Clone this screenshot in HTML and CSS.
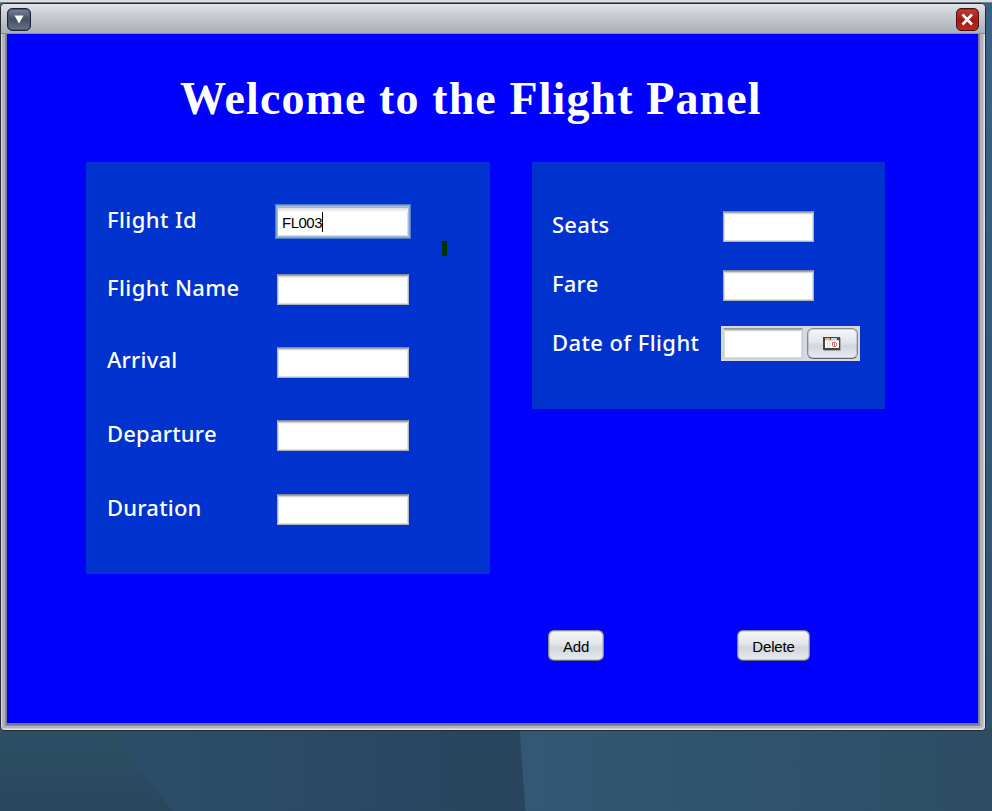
FILE: index.html
```html
<!DOCTYPE html>
<html lang="en">
<head>
<meta charset="utf-8">
<title>Flight Panel</title>
<link rel="stylesheet" href="styles.css">
</head>
<body>
<svg class="wallpaper" viewBox="0 0 992 811" preserveAspectRatio="none" aria-hidden="true">
  <defs>
    <linearGradient id="a" x1="0" y1="0" x2="0" y2="1"><stop offset="0" stop-color="#2e5063"/><stop offset="1" stop-color="#29465d"/></linearGradient>
    <linearGradient id="b" x1="0" y1="0" x2="1" y2="0"><stop offset="0" stop-color="#2d4e69"/><stop offset="1" stop-color="#29445d"/></linearGradient>
    <linearGradient id="c" x1="0" y1="0" x2="1" y2="0"><stop offset="0" stop-color="#325873"/><stop offset="1" stop-color="#2e4d64"/></linearGradient>
    <linearGradient id="d" x1="0" y1="0" x2="0" y2="1"><stop offset="0" stop-color="#3a6285"/><stop offset="1" stop-color="#2e5068"/></linearGradient>
  </defs>
  <rect width="992" height="811" fill="url(#d)"/>
  <path d="M0 728H110L174 811H0Z" fill="url(#a)"/>
  <path d="M109 728H520L526 811H173Z" fill="url(#b)"/>
  <path d="M519.500 728H992V811H525.500Z" fill="url(#c)"/>
</svg>
<div class="desktop-edge"></div>
<main class="window">
  <header class="titlebar">
    <button class="sys menu" aria-label="Menu"><svg width="22" height="21" viewBox="0 0 22 21"><path d="M6.500 6.500H15.500L11 14.500Z" fill="#fff"/></svg></button>
    <button class="sys close" aria-label="Close"><svg width="21" height="21" viewBox="0 0 21 21"><path d="M5.500 5.500L15 15.500M15 5.500L5.500 15.500" stroke="#fff" stroke-width="2.600"/></svg></button>
  </header>
  <section class="content">
    <h1>Welcome to the Flight Panel</h1>
    <div class="panels">
      <form class="panel route">
        <label>Flight Id</label><div class="field focused"><span>FL003</span></div>
        <label>Flight Name</label><div class="field"></div>
        <label class="tight raised">Arrival</label><div class="field"></div>
        <label class="tight">Departure</label><div class="field"></div>
        <label class="tight">Duration</label><div class="field"></div>
        <i class="mark"></i>
      </form>
      <form class="panel booking">
        <label class="tight">Seats</label><div class="field"></div>
        <label class="tight">Fare</label><div class="field"></div>
        <label>Date of Flight</label>
        <div class="date"><div class="field"></div><button type="button" class="btn" aria-label="Choose date"><svg width="18" height="14" viewBox="0 0 18 14" shape-rendering="crispEdges"><path d="M1 1H18V14H1Z" fill="#aaa"/><path d="M0 0H17V13H0Z" fill="#444"/><path d="M2 4H16V11H2Z" fill="#fff"/><path d="M2 1H7V3H2Z" fill="#f9b94b"/><path d="M8 1H14V3H8Z" fill="#bcd4f6"/><path d="M2 3H16V4H2Z" fill="#ddd"/><path d="M4 5H5V11H4ZM6 4H7V11H6Z" fill="#ddd"/><path d="M9 5H13V6H14V9H13V10H10V9H9Z" fill="#e66a66"/><path d="M10 6H11V9H10ZM12 6H13V9H12Z" fill="#fff"/></svg></button></div>
      </form>
    </div>
    <div class="actions"><button class="btn add">Add</button><button class="btn delete">Delete</button></div>
  </section>
</main>
</body>
</html>
```
FILE: styles.css
```css
* { box-sizing: border-box; }
body { margin: 0; height: 811px; overflow: hidden; position: relative; font-family: "Liberation Sans", sans-serif; }
button { padding: 0; font-family: inherit; }
svg { display: block; }
.wallpaper { position: absolute; inset: 0; width: 992px; height: 811px; z-index: -1; }
.desktop-edge { height: 3px; background: linear-gradient(#d8dce5 0 2px, #777d88 2px); }
.window { width: 986px; height: 728px; border: 1px solid #252a32; border-radius: 5px 5px 4px 4px; background: #b0b3bd; box-shadow: inset 1px 0 #d9dbe3, inset -1px -1px #e4e5ea, inset -2px -2px #c9cad4; padding: 0 6px 6px 5px; }
.titlebar { height: 30px; margin: 0 -6px 0 -5px; padding: 4px 6px 0 6px; display: flex; justify-content: space-between; align-items: flex-start; border-radius: 4px 4px 0 0; background: linear-gradient(#e2e3e6, #cbced3 35%, #aaafb9); border-bottom: 1px solid #858b96; }
.sys { border: 1px solid #202536; border-radius: 5px; display: grid; place-items: center; width: 24px; height: 23px; box-shadow: inset 0 0 0 1px #4c566b; background: linear-gradient(#78849b, #454f62 50%, #68748b); }
.close { width: 23px; border-color: #461010; box-shadow: inset 0 0 0 1px #a42b25; background: linear-gradient(#bd4037, #a3150e 55%, #bb2d24); }
.content { height: 691px; background: #00f; border: 1px solid #777d8b; border-top: 0; border-bottom: 2px solid #737985; box-shadow: 0 0 0 1px #858b99; padding-top: 38px; }
h1 { margin: 0 0 0 173px; height: 90px; font: bold 46px/54px "Liberation Serif", serif; letter-spacing: 1.100px; color: #fff; white-space: nowrap; }
.panels { display: flex; align-items: flex-start; gap: 42px; padding-left: 79px; }
.panel { background: #0033cd; display: grid; align-content: start; align-items: start; position: relative; }
.route { width: 404px; height: 412px; padding: 44px 0 0 21px; grid-template-columns: 170px 132px; grid-template-rows: 68px 73px 73px 74px 31px; }
.booking { width: 353px; height: 247px; padding: 49px 0 0 20px; grid-template-columns: 171px 139px; grid-template-rows: 59px 59px 35px; }
label { margin-top: -1px; font: 500 22px/28px "Noto Sans", sans-serif; letter-spacing: 0.400px; color: #fff; white-space: nowrap; }
.tight { letter-spacing: 0.200px; }
.raised { margin-top: -2px; }
.field { height: 31px; width: 132px; background: #fff; border: 1px solid #aeb2bd; border-top-color: #8086a0; box-shadow: inset 0 1px #a7a7aa, inset 0 2px #d5d5d7, inset 0 3px #f1f1f1, inset 1px 0 #ddd, inset -1px -1px #ddd; }
.booking .field { width: 91px; }
.focused { border-color: #a9bdd2; box-shadow: 0 0 0 1px #7ba6d2, 0 0 0 2px #4a80cd, inset 0 1px #b4b4b4, inset 0 3px #e3e3e3, inset 0 5px #f5f5f5, inset -1px -1px #ddd; padding: 0 0 0 4px; font-size: 15px; line-height: 31px; }
.focused span { display: inline-block; height: 20px; line-height: 22px; border-right: 1px solid #000; letter-spacing: -0.500px; }
.mark { position: absolute; left: 356px; top: 79px; width: 5px; height: 15px; background: #003300; }
.date { margin: -3px 0 0 -2px; width: 139px; height: 35px; display: flex; gap: 4px; padding: 2px; background: #d5d9e0; }
.booking .date .field { width: 80px; border-color: #c9ccd2; border-top-color: #999; }
.btn { border: 1px solid #858990; border-bottom-color: #626870; border-radius: 6px; background: linear-gradient(#f8f8fa, #e2e4e9 45%, #d2d5dc 58%, #e8ebf1); box-shadow: inset 0 0 0 1px rgba(120,125,135,.3); font-size: 15px; color: #000; display: grid; place-items: center; }
.date .btn { width: 51px; height: 31px; }
.date svg { margin-left: -1px; }
.actions { display: flex; gap: 133px; padding: 56px 0 0 541px; }
.add { width: 56px; height: 31px; }
.delete { width: 73px; height: 31px; }
.actions .btn { padding-top: 2px; letter-spacing: -0.150px; }
```
